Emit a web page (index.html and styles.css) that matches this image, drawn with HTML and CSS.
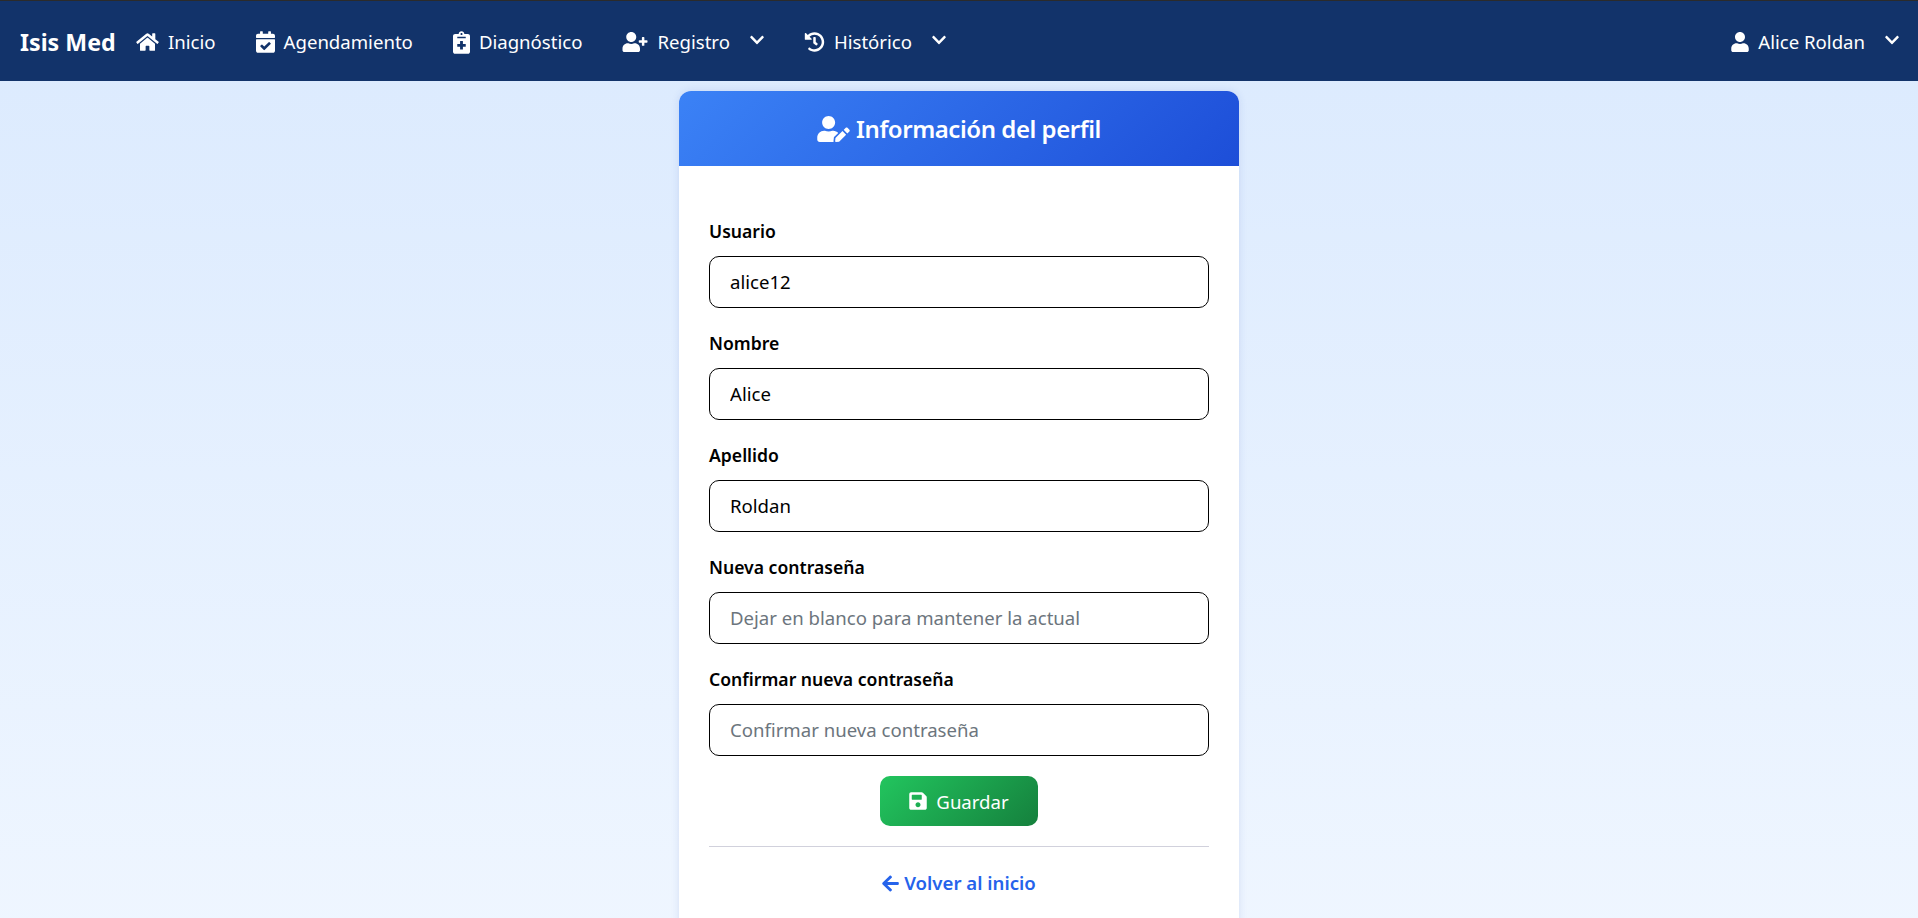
FILE: index.html
```html
<!DOCTYPE html>
<html lang="es">
<head>
<meta charset="utf-8">
<title>Isis Med</title>
<link rel="stylesheet" href="styles.css">
</head>
<body>
<nav class="navbar">
  <a class="brand" href="#">Isis Med</a>
  <ul class="nav-list">
    <li><a class="nav-link" href="#"><svg class="ico ico-home" viewBox="0 0 576 512"><path d="M280.37 148.26L96 300.11V464a16 16 0 0 0 16 16l112.06-.29a16 16 0 0 0 15.92-16V368a16 16 0 0 1 16-16h64a16 16 0 0 1 16 16v95.64a16 16 0 0 0 16 16.05L464 480a16 16 0 0 0 16-16V300L295.67 148.26a12.19 12.19 0 0 0-15.3 0zM571.6 251.47L488 182.56V44.05a12 12 0 0 0-12-12h-56a12 12 0 0 0-12 12v72.61L318.47 43a48 48 0 0 0-61 0L4.34 251.47a12 12 0 0 0-1.6 16.9l25.5 31A12 12 0 0 0 45.15 301l235.22-193.74a12.19 12.19 0 0 1 15.3 0L530.9 301a12 12 0 0 0 16.9-1.6l25.5-31a12 12 0 0 0-1.7-16.93z"/></svg>Inicio</a></li>
    <li><a class="nav-link" href="#"><svg class="ico ico-cal" viewBox="0 0 448 512"><path d="M436 160H12c-6.627 0-12-5.373-12-12v-36c0-26.51 21.49-48 48-48h48V12c0-6.627 5.373-12 12-12h40c6.627 0 12 5.373 12 12v52h128V12c0-6.627 5.373-12 12-12h40c6.627 0 12 5.373 12 12v52h48c26.51 0 48 21.49 48 48v36c0 6.627-5.373 12-12 12zM12 192h424c6.627 0 12 5.373 12 12v260c0 26.51-21.49 48-48 48H48c-26.51 0-48-21.49-48-48V204c0-6.627 5.373-12 12-12zm333.296 95.947l-28.169-28.398c-4.667-4.705-12.265-4.736-16.97-.068L194.12 364.665l-45.98-46.352c-4.667-4.705-12.266-4.736-16.971-.068l-28.397 28.17c-4.705 4.667-4.736 12.265-.068 16.97l82.601 83.269c4.667 4.705 12.265 4.736 16.97.068l142.953-141.805c4.705-4.667 4.736-12.265.068-16.97z"/></svg>Agendamiento</a></li>
    <li><a class="nav-link" href="#"><svg class="ico ico-clip" viewBox="0 0 384 512"><path d="M336 64h-80c0-35.3-28.7-64-64-64s-64 28.7-64 64H48C21.5 64 0 85.5 0 112v352c0 26.5 21.5 48 48 48h288c26.5 0 48-21.5 48-48V112c0-26.5-21.5-48-48-48zM192 40c13.3 0 24 10.7 24 24s-10.7 24-24 24-24-10.7-24-24 10.7-24 24-24zm96 304c0 4.4-3.6 8-8 8h-56v56c0 4.4-3.6 8-8 8h-48c-4.4 0-8-3.6-8-8v-56h-56c-4.4 0-8-3.6-8-8v-48c0-4.4 3.6-8 8-8h56v-56c0-4.4 3.6-8 8-8h48c4.4 0 8 3.6 8 8v56h56c4.4 0 8 3.6 8 8v48zm0-192c0 4.4-3.6 8-8 8H104c-4.4 0-8-3.6-8-8v-16c0-4.4 3.6-8 8-8h176c4.4 0 8 3.6 8 8v16z"/></svg>Diagnóstico</a></li>
    <li><a class="nav-link" href="#"><svg class="ico ico-plus" viewBox="0 0 640 512"><path d="M624 208h-64v-64c0-8.8-7.2-16-16-16h-32c-8.8 0-16 7.2-16 16v64h-64c-8.8 0-16 7.2-16 16v32c0 8.8 7.2 16 16 16h64v64c0 8.8 7.2 16 16 16h32c8.8 0 16-7.2 16-16v-64h64c8.8 0 16-7.2 16-16v-32c0-8.8-7.2-16-16-16zm-400 48c70.7 0 128-57.3 128-128S294.7 0 224 0 96 57.3 96 128s57.3 128 128 128zm89.6 32h-16.7c-22.2 10.2-46.9 16-72.9 16s-50.6-5.8-72.9-16h-16.7C60.2 288 0 348.2 0 422.4V464c0 26.5 21.5 48 48 48h352c26.5 0 48-21.5 48-48v-41.6c0-74.2-60.2-134.4-134.4-134.4z"/></svg>Registro<svg class="chev" viewBox="0 0 448 512"><path d="M207.029 381.476L12.686 187.132c-9.373-9.373-9.373-24.569 0-33.941l22.667-22.667c9.357-9.357 24.522-9.375 33.901-.04L224 284.505l154.745-154.021c9.379-9.335 24.544-9.317 33.901.04l22.667 22.667c9.373 9.373 9.373 24.569 0 33.941L240.971 381.476c-9.373 9.372-24.569 9.372-33.942 0z"/></svg></a></li>
    <li><a class="nav-link" href="#"><svg class="ico ico-hist" viewBox="0 0 512 512"><path d="M504 255.531c.253 136.64-111.18 248.372-247.82 248.468-59.015.042-113.223-20.53-155.822-54.911-11.077-8.94-11.905-25.541-1.839-35.607l11.267-11.267c8.609-8.609 22.353-9.551 31.891-1.984C173.062 425.135 212.781 440 256 440c101.705 0 184-82.311 184-184 0-101.705-82.311-184-184-184-48.814 0-93.149 18.969-126.068 49.932l50.754 50.754c10.08 10.08 2.941 27.314-11.313 27.314H24c-8.837 0-16-7.163-16-16V38.627c0-14.254 17.234-21.393 27.314-11.314l49.372 49.372C129.209 34.136 189.552 8 256 8c136.81 0 247.747 110.78 248 247.531zm-180.912 78.784l9.823-12.63c8.138-10.463 6.253-25.542-4.21-33.679L288 256.349V152c0-13.255-10.745-24-24-24h-16c-13.255 0-24 10.745-24 24v135.651l65.409 50.874c10.463 8.137 25.541 6.253 33.679-4.21z"/></svg>Histórico<svg class="chev" viewBox="0 0 448 512"><path d="M207.029 381.476L12.686 187.132c-9.373-9.373-9.373-24.569 0-33.941l22.667-22.667c9.357-9.357 24.522-9.375 33.901-.04L224 284.505l154.745-154.021c9.379-9.335 24.544-9.317 33.901.04l22.667 22.667c9.373 9.373 9.373 24.569 0 33.941L240.971 381.476c-9.373 9.372-24.569 9.372-33.942 0z"/></svg></a></li>
  </ul>
  <a class="nav-link nav-user" href="#"><svg class="ico ico-user" viewBox="0 0 448 512"><path d="M224 256c70.7 0 128-57.3 128-128S294.7 0 224 0 96 57.3 96 128s57.3 128 128 128zm89.6 32h-16.7c-22.2 10.2-46.9 16-72.9 16s-50.6-5.8-72.9-16h-16.7C60.2 288 0 348.2 0 422.4V464c0 26.5 21.5 48 48 48h352c26.5 0 48-21.5 48-48v-41.6c0-74.2-60.2-134.4-134.4-134.4z"/></svg>Alice Roldan<svg class="chev" viewBox="0 0 448 512"><path d="M207.029 381.476L12.686 187.132c-9.373-9.373-9.373-24.569 0-33.941l22.667-22.667c9.357-9.357 24.522-9.375 33.901-.04L224 284.505l154.745-154.021c9.379-9.335 24.544-9.317 33.901.04l22.667 22.667c9.373 9.373 9.373 24.569 0 33.941L240.971 381.476c-9.373 9.372-24.569 9.372-33.942 0z"/></svg></a>
</nav>
<main class="page">
  <section class="card">
    <header class="card-header">
      <svg class="ico-title" viewBox="0 0 640 512"><path d="M224 256c70.7 0 128-57.3 128-128S294.7 0 224 0 96 57.3 96 128s57.3 128 128 128zm89.6 32h-16.7c-22.2 10.2-46.9 16-72.9 16s-50.6-5.8-72.9-16h-16.7C60.2 288 0 348.2 0 422.4V464c0 26.5 21.5 48 48 48h274.9c-2.4-6.8-3.4-14-2.6-21.3l6.8-60.9 1.2-11.1 7.9-7.9 77.3-77.3c-24.5-27.7-60-45.5-99.9-45.5zm45.3 145.3l-6.8 61c-1.1 10.2 7.5 18.8 17.6 17.6l60.9-6.8 137.9-137.9-71.7-71.7-137.9 137.8zM633 268.9L595.1 231c-9.3-9.3-24.5-9.3-33.8 0l-37.8 37.8-4.1 4.1 71.8 71.7 41.8-41.8c9.3-9.4 9.3-24.5 0-33.9z"/></svg>
      <h1 class="card-title">Información del perfil</h1>
    </header>
    <form class="card-body">
      <div class="field"><label class="field-label" for="u">Usuario</label><input class="field-input" id="u" type="text" value="alice12"></div>
      <div class="field"><label class="field-label" for="n">Nombre</label><input class="field-input" id="n" type="text" value="Alice"></div>
      <div class="field"><label class="field-label" for="a">Apellido</label><input class="field-input" id="a" type="text" value="Roldan"></div>
      <div class="field"><label class="field-label" for="p">Nueva contraseña</label><input class="field-input" id="p" type="text" placeholder="Dejar en blanco para mantener la actual"></div>
      <div class="field"><label class="field-label" for="c">Confirmar nueva contraseña</label><input class="field-input" id="c" type="text" placeholder="Confirmar nueva contraseña"></div>
      <div class="actions">
        <button class="btn-save" type="button"><svg class="ico-save" viewBox="0 0 448 512"><path d="M433.941 129.941l-83.882-83.882A48 48 0 0 0 316.118 32H48C21.49 32 0 53.49 0 80v352c0 26.51 21.49 48 48 48h352c26.51 0 48-21.49 48-48V163.882a48 48 0 0 0-14.059-33.941zM224 416c-35.346 0-64-28.654-64-64 0-35.346 28.654-64 64-64s64 28.654 64 64c0 35.346-28.654 64-64 64zm96-304.52V212c0 6.627-5.373 12-12 12H76c-6.627 0-12-5.373-12-12V108c0-6.627 5.373-12 12-12h228.52c3.183 0 6.235 1.264 8.485 3.515l3.48 3.48A11.996 11.996 0 0 1 320 111.48z"/></svg>Guardar</button>
      </div>
      <hr class="divider">
      <div class="back"><a class="back-link" href="#"><svg class="ico-back" viewBox="0 0 448 512"><path d="M257.5 445.1l-22.2 22.2c-9.4 9.4-24.6 9.4-33.9 0L7 273c-9.4-9.4-9.4-24.6 0-33.9L201.4 44.7c9.4-9.4 24.6-9.4 33.9 0l22.2 22.2c9.5 9.5 9.3 25-.4 34.3L136.6 216H424c13.3 0 24 10.7 24 24v32c0 13.3-10.7 24-24 24H136.6l120.5 114.8c9.8 9.3 10 24.8.4 34.3z"/></svg>Volver al inicio</a></div>
    </form>
  </section>
</main>
</body>
</html>
```
FILE: styles.css
```css
* { box-sizing: border-box; }
html, body { height: 100%; }
html { overflow: hidden; }
body {
  margin: 0;
  font-family: "Noto Sans", "Open Sans", sans-serif;
  font-size: 18px;
  color: #000;
  background: linear-gradient(180deg, #dbeafe 0%, #eff6ff 103%);
  overflow: hidden;
}
a { text-decoration: none; }
.navbar {
  height: 81px;
  border-top: 1px solid #2b2b2b;
  background: #12336a;
  display: flex;
  align-items: center;
  padding: 2px 19px 0 20px;
  color: #fff;
}
.brand {
  color: #fff;
  font-size: 23.2px;
  font-weight: 700;
  width: 96px;
  flex: none;
  white-space: nowrap;
}
.nav-list {
  list-style: none;
  display: flex;
  gap: 40px;
  margin: 0 0 0 20px;
  padding: 0;
  flex: 1;
}
.nav-link {
  display: flex;
  align-items: center;
  color: #fff;
  font-size: 18.6px;
  line-height: 26px;
  white-space: nowrap;
}
.ico { fill: #fff; height: 20px; margin-right: 9px; flex: none; }
.ico-home { width: 23px; }
.ico-cal { width: 19px; height: 22px; }
.ico-clip { width: 17px; height: 23px; }
.ico-plus { width: 26px; }
.ico-hist { width: 21px; }
.ico-user { width: 18px; }
.chev { fill: #fff; width: 14px; height: 16px; margin-left: 20px; margin-top: -4px; flex: none; }
.page { display: flex; justify-content: center; padding-top: 10px; }
.card {
  width: 560px;
  background: #fff;
  border-radius: 12px;
  box-shadow: 0 0 8px rgba(30, 64, 175, 0.12);
  overflow: hidden;
}
.card-header {
  height: 75px;
  background: linear-gradient(135deg, #3b82f6, #1d4ed8);
  color: #fff;
  display: flex;
  align-items: center;
  justify-content: center;
  gap: 6px;
}
.ico-title { fill: #fff; width: 33px; height: 26px; flex: none; }
.card-title {
  margin: 0;
  font-size: 24px;
  font-weight: 600;
  letter-spacing: -0.45px;
  line-height: 32px;
}
.card-body { padding: 50px 30px 60px; }
.field { margin-bottom: 20px; }
.field-label {
  display: block;
  padding-top: 2px;
  margin-bottom: 12px;
  line-height: 26px;
  font-size: 17.6px;
  font-weight: 600;
}
.field-input {
  display: block;
  width: 100%;
  height: 52px;
  border: 1px solid #000;
  border-radius: 10px;
  padding: 0 20px 2px;
  font-family: inherit;
  font-size: 18.6px;
  color: #000;
  background: #fff;
  outline: none;
}
.field-input::placeholder { color: #6c757d; opacity: 1; }
.actions { display: flex; justify-content: center; }
.btn-save {
  width: 158px;
  height: 50px;
  border: 0;
  border-radius: 10px;
  background: linear-gradient(135deg, #22c55e, #15803d);
  color: #fff;
  font-family: inherit;
  font-size: 18.6px;
  display: flex;
  align-items: center;
  justify-content: center;
  gap: 9px;
}
.ico-save { fill: #fff; width: 18px; height: 20px; flex: none; }
.divider { margin: 20px 0 23px; border: 0; border-top: 1px solid #d1d1dc; }
.back { text-align: center; line-height: 26px; }
.back-link {
  color: #2563eb;
  font-size: 18.6px;
  font-weight: 600;
  display: inline-flex;
  align-items: center;
  gap: 5px;
}
.ico-back { fill: #2563eb; width: 17px; height: 19px; flex: none; }
```
